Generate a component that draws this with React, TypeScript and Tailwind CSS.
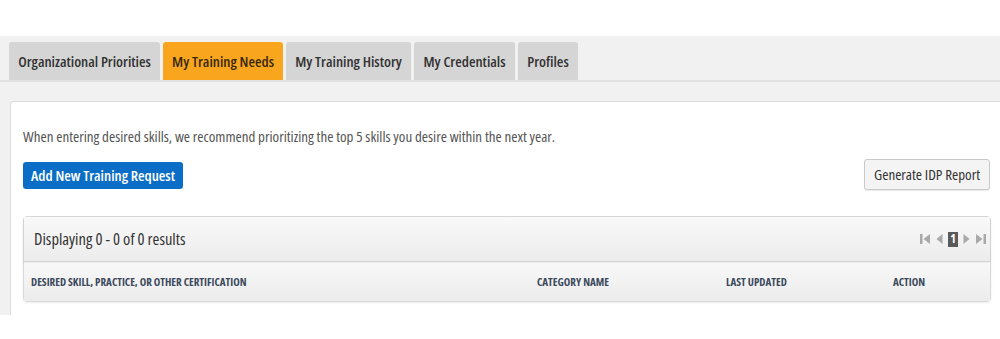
const TABS = [
  { label: 'Organizational Priorities', w: 'w-[151px]' },
  { label: 'My Training Needs', w: 'w-[120px]', active: true },
  { label: 'My Training History', w: 'w-[125px]' },
  { label: 'My Credentials', w: 'w-[101px]' },
  { label: 'Profiles', w: 'w-[60px]' },
]

function Pager() {
  return (
    <div className="flex items-center gap-[5px] text-[#a9a9a9]">
      {/* first */}
      <svg width="11" height="12" viewBox="0 0 11 12" fill="currentColor">
        <rect x="0" y="1" width="2.5" height="10" />
        <path d="M10 1 L3.5 6 L10 11 Z" />
      </svg>
      {/* prev */}
      <svg width="7" height="12" viewBox="0 0 7 12" fill="currentColor">
        <path d="M6.5 1 L0.5 6 L6.5 11 Z" />
      </svg>
      <div className="flex h-[15px] w-[10px] items-center justify-center bg-[#5a5a5a] text-[12px] font-bold leading-none text-white">1</div>
      {/* next */}
      <svg width="7" height="12" viewBox="0 0 7 12" fill="currentColor">
        <path d="M0.5 1 L6.5 6 L0.5 11 Z" />
      </svg>
      {/* last */}
      <svg width="11" height="12" viewBox="0 0 11 12" fill="currentColor">
        <path d="M1 1 L7.5 6 L1 11 Z" />
        <rect x="8.5" y="1" width="2.5" height="10" />
      </svg>
    </div>
  )
}

export default function App() {
  return (
    <div className="h-[339px] w-[1000px] overflow-hidden bg-white font-['Open_Sans','Noto_Sans',sans-serif] font-stretch-condensed text-[#333]">
      <div className="mt-[36px] bg-[#f1f1f1] pt-[6px]">
        {/* tabs */}
        <div className="flex gap-[3px] pl-[9px]">
          {TABS.map(t => (
            <div
              key={t.label}
              className={`${t.w} flex h-[38px] items-center justify-center rounded-t-[3px] text-[15px] font-semibold ${
                t.active ? 'bg-[#f9a61e] text-[#3a2a10]' : 'bg-[#d5d5d5] text-[#333]'
              }`}
            >
              {t.label}
            </div>
          ))}
        </div>
        <div className="h-[2px] bg-[#e2e2e2]" />
        <div className="h-[19px]" />

        {/* panel */}
        <div className="ml-[10px] h-[214px] rounded-tl-[4px] border-l border-t border-[#dcdcdc] bg-white pl-[12px] pr-[10px]">
          <p className="pt-[25px] text-[15px] leading-[18px] text-[#555]">
            When entering desired skills, we recommend prioritizing the top 5 skills you desire within the next year.
          </p>

          <div className="mt-[14px] flex items-end justify-between">
            <button className="mb-[1px] h-[27px] w-[160px] rounded-[3px] bg-[#0b6ec6] text-[15px] font-semibold text-white">
              Add New Training Request
            </button>
            <button className="h-[31px] w-[126px] rounded-[3px] border border-[#c9c9c9] bg-[#f4f4f4] text-[15px] text-[#333] shadow-[0_1px_1px_rgba(0,0,0,0.08)]">
              Generate IDP Report
            </button>
          </div>

          {/* table */}
          <div className="mt-[26px] w-[968px] rounded-[4px] border border-[#d9d9d9] shadow-[0_1px_2px_rgba(0,0,0,0.08)]">
            <div className="flex h-[45px] items-center justify-between border-b border-[#d2d2d2] bg-gradient-to-b from-[#f9f9f9] to-[#ececec] pl-[10px] pr-[4px] shadow-[0_1px_2px_rgba(0,0,0,0.1)]">
              <span className="text-[16.5px] text-[#333]">Displaying 0 - 0 of 0 results</span>
              <Pager />
            </div>
            <div className="mt-[1px] grid h-[38px] grid-cols-[505px_189px_167px_1fr] items-center bg-gradient-to-b from-[#f8f8f8] to-[#ececec] text-[11px] font-bold uppercase text-[#3c4a5c]">
              <span className="pl-[7px]">Desired Skill, Practice, or Other Certification</span>
              <span className="pl-[8px]">Category Name</span>
              <span className="pl-[8px]">Last Updated</span>
              <span className="pl-[8px]">Action</span>
            </div>
          </div>
        </div>
      </div>
    </div>
  )
}
